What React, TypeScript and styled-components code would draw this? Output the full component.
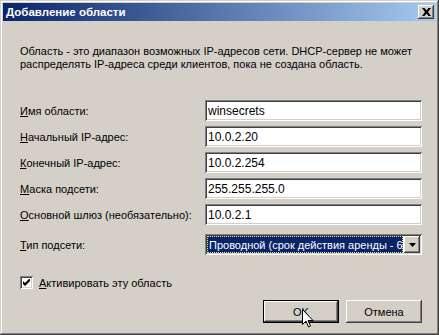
import styled, {createGlobalStyle} from "styled-components";

const GlobalStyle = createGlobalStyle`
  html, body {
    margin: 0;
    padding: 0;
    background: #d4d0c8;
  }
  body {
    font-family: "Liberation Sans", Arial, sans-serif;
    font-size: 11px;
    color: #000;
  }
`;

const Window = styled.div`
  position: relative;
  width: 439px;
  height: 335px;
  box-sizing: border-box;
  padding: 3px;
  background: #d4d0c8;
  box-shadow: inset -1px -1px #404040, inset 1px 1px #d4d0c8,
    inset -2px -2px #808080, inset 2px 2px #ffffff;
  overflow: hidden;
`;

const TitleBar = styled.div`
  height: 18px;
  display: flex;
  align-items: center;
  justify-content: space-between;
  padding: 0 2px 0 3px;
  background: linear-gradient(to right, #0a246a, #a6caf0);
`;

const Title = styled.span`
  color: #fff;
  font-weight: bold;
  font-size: 11.5px;
`;

const CloseButton = styled.div`
  width: 16px;
  height: 14px;
  box-sizing: border-box;
  display: flex;
  align-items: center;
  justify-content: center;
  background: #d4d0c8;
  box-shadow: inset -1px -1px #404040, inset 1px 1px #ffffff,
    inset -2px -2px #808080;
`;

const Body = styled.div`
  padding: 24px 14px 0 17px;
`;

const Description = styled.p`
  margin: 0;
  line-height: 13px;
`;

const Form = styled.div`
  margin-top: 29px;
  display: grid;
  grid-template-columns: 185px 217px;
  row-gap: 5px;
  align-items: center;
`;

const Label = styled.label<{ $gap?: number }>`
  margin-top: ${p => p.$gap || 0}px;
  white-space: nowrap;
`;

const Accel = styled.span`
  text-decoration: underline;
`;

const sunken = `
  box-sizing: border-box;
  box-shadow: inset 1px 1px #808080, inset -1px -1px #ffffff,
    inset 2px 2px #404040, inset -2px -2px #d4d0c8;
`;

const TextField = styled.input`
  ${sunken};
  height: 21px;
  width: 100%;
  border: none;
  outline: none;
  margin: 0;
  padding: 1px 3px 0 3px;
  background: #fff;
  font-family: "Liberation Sans", Arial, sans-serif;
  font-size: 12px;
  color: #000;
`;

const Select = styled.div<{ $gap?: number }>`
  ${sunken};
  margin-top: ${p => p.$gap || 0}px;
  height: 21px;
  padding: 2px;
  display: flex;
  background: #fff;
`;

const SelectedText = styled.div`
  flex: 1;
  min-width: 0;
  margin-right: 1px;
  box-sizing: border-box;
  padding: 0 2px;
  display: flex;
  align-items: center;
  overflow: hidden;
  white-space: nowrap;
  background: #0a246a;
  color: #fff;
  font-size: 11px;
  outline: 1px dotted #e8e880;
  outline-offset: -1px;
`;

const ArrowButton = styled.div`
  width: 16px;
  box-sizing: border-box;
  display: flex;
  align-items: center;
  justify-content: center;
  background: #d4d0c8;
  box-shadow: inset -1px -1px #404040, inset 1px 1px #ffffff,
    inset -2px -2px #808080, inset 2px 2px #d4d0c8;
`;

const CheckRow = styled.label`
  margin-top: 21px;
  display: flex;
  align-items: center;
  gap: 6px;
  height: 13px;
`;

const CheckBox = styled.span`
  ${sunken};
  width: 13px;
  height: 13px;
  display: flex;
  align-items: center;
  justify-content: center;
  background: #fff;
`;

const ButtonRow = styled.div`
  margin-top: 11px;
  display: flex;
  justify-content: flex-end;
  gap: 7px;
`;

const Button = styled.button<{ $default?: boolean }>`
  width: 76px;
  height: 23px;
  margin: 0;
  padding: 0;
  border: ${p => (p.$default ? "1px solid #000" : "none")};
  background: #d4d0c8;
  font-family: "Liberation Sans", Arial, sans-serif;
  font-size: 11px;
  color: #000;
  box-shadow: inset -1px -1px #404040, inset 1px 1px #ffffff,
    inset -2px -2px #808080;
`;

const Cursor = styled.svg`
  position: absolute;
  left: 302px;
  top: 309px;
`;

export default function App() {
  return (
    <>
      <GlobalStyle />
      <Window>
        <TitleBar>
          <Title>Добавление области</Title>
          <CloseButton>
            <svg width="9" height="8" viewBox="0 0 9 8">
              <path d="M0 0h2.5l2 2.5 2-2.5H9L6 4l3 4H6.5l-2-2.5-2 2.5H0l3-4z" fill="#000" />
            </svg>
          </CloseButton>
        </TitleBar>
        <Body>
          <Description>
            Область - это диапазон возможных IP-адресов сети. DHCP-сервер не может
            распределять IP-адреса среди клиентов, пока не создана область.
          </Description>
          <Form>
            <Label><Accel>И</Accel>мя области:</Label>
            <TextField defaultValue="winsecrets" />
            <Label><Accel>Н</Accel>ачальный IP-адрес:</Label>
            <TextField defaultValue="10.0.2.20" />
            <Label><Accel>К</Accel>онечный IP-адрес:</Label>
            <TextField defaultValue="10.0.2.254" />
            <Label><Accel>М</Accel>аска подсети:</Label>
            <TextField defaultValue="255.255.255.0" />
            <Label><Accel>О</Accel>сновной шлюз (необязательно):</Label>
            <TextField defaultValue="10.0.2.1" />
            <Label $gap={4}><Accel>Т</Accel>ип подсети:</Label>
            <Select $gap={4}>
              <SelectedText>Проводной (срок действия аренды - 6 дней)</SelectedText>
              <ArrowButton>
                <svg width="7" height="4" viewBox="0 0 7 4">
                  <path d="M0 0h7L3.5 4z" fill="#000" />
                </svg>
              </ArrowButton>
            </Select>
          </Form>
          <CheckRow>
            <CheckBox>
              <svg width="7" height="7" viewBox="0 0 7 7">
                <path d="M0 2v3l2 2 5-5V-1L2 4z" fill="#000" />
              </svg>
            </CheckBox>
            <span><Accel>А</Accel>ктивировать эту область</span>
          </CheckRow>
          <ButtonRow>
            <Button $default>OK</Button>
            <Button>Отмена</Button>
          </ButtonRow>
        </Body>
        <Cursor width="12" height="20" viewBox="0 0 12 20">
          <path d="M0.5 0.5v15l3.5-3.5 2.5 6 2-1-2.5-5.5h5z" fill="#fff" stroke="#000" strokeWidth="1" />
        </Cursor>
      </Window>
    </>
  );
}
